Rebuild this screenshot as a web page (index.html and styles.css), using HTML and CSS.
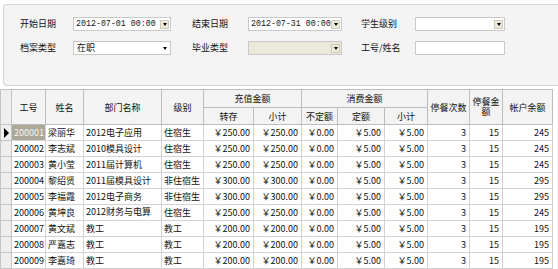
FILE: index.html
```html
<!DOCTYPE html>
<html lang="zh">
<head>
<meta charset="utf-8">
<link rel="stylesheet" href="styles.css">
</head>
<body>
<div class="panel">
  <div class="filters">
    <span class="lbl">开始日期</span>
    <div class="box date"><span class="val">2012-07-01 00:00</span><span class="btn"><i class="arrow"></i></span></div>
    <span class="lbl l2">结束日期</span>
    <div class="box date"><span class="val">2012-07-31 00:00</span><span class="btn"><i class="arrow"></i></span></div>
    <span class="lbl l3">学生级别</span>
    <div class="box"><span class="val"></span><span class="btn"><i class="arrow"></i></span></div>

    <span class="lbl">档案类型</span>
    <div class="box"><span class="val cn">在职</span><span class="plain"><i class="arrow"></i></span></div>
    <span class="lbl l2">毕业类型</span>
    <div class="box disabled"><span class="val"></span><span class="btn"><i class="arrow"></i></span></div>
    <span class="lbl l3">工号/姓名</span>
    <div class="box"><span class="val"></span></div>
  </div>
</div>

<table class="grid">
  <colgroup>
    <col class="c-rh"><col class="c-id"><col class="c-name"><col class="c-dept"><col class="c-lv">
    <col class="c-m1"><col class="c-m2"><col class="c-m3"><col class="c-m4"><col class="c-m5">
    <col class="c-n1"><col class="c-n2"><col class="c-n3">
  </colgroup>
  <thead>
    <tr class="h1">
      <th rowspan="2" class="rh"></th>
      <th rowspan="2">工号</th>
      <th rowspan="2">姓名</th>
      <th rowspan="2">部门名称</th>
      <th rowspan="2">级别</th>
      <th colspan="2">充值金额</th>
      <th colspan="3">消费金额</th>
      <th rowspan="2">停餐次数</th>
      <th rowspan="2" class="wrap">停餐金<br>额</th>
      <th rowspan="2">帐户余额</th>
    </tr>
    <tr class="h2">
      <th>转存</th>
      <th>小计</th>
      <th>不定额</th>
      <th>定额</th>
      <th>小计</th>
    </tr>
  </thead>
  <tbody>
    <tr>
      <td class="rh"><svg class="ptr" width="7" height="10" viewBox="0 0 7 10"><polygon points="1,0 6,5 1,10" fill="#000"/></svg></td>
      <td class="sel">200001</td><td>梁丽华</td><td>2012电子应用</td><td>住宿生</td>
      <td class="r">￥250.00</td><td class="r">￥250.00</td><td class="r">￥0.00</td><td class="r">￥5.00</td><td class="r">￥5.00</td>
      <td class="r">3</td><td class="r">15</td><td class="r">245</td>
    </tr>
    <tr>
      <td class="rh"></td>
      <td>200002</td><td>李志斌</td><td>2010模具设计</td><td>住宿生</td>
      <td class="r">￥250.00</td><td class="r">￥250.00</td><td class="r">￥0.00</td><td class="r">￥5.00</td><td class="r">￥5.00</td>
      <td class="r">3</td><td class="r">15</td><td class="r">245</td>
    </tr>
    <tr>
      <td class="rh"></td>
      <td>200003</td><td>黄小莹</td><td>2011届计算机</td><td>住宿生</td>
      <td class="r">￥250.00</td><td class="r">￥250.00</td><td class="r">￥0.00</td><td class="r">￥5.00</td><td class="r">￥5.00</td>
      <td class="r">3</td><td class="r">15</td><td class="r">245</td>
    </tr>
    <tr>
      <td class="rh"></td>
      <td>200004</td><td>黎绍贤</td><td>2011届模具设计</td><td>非住宿生</td>
      <td class="r">￥300.00</td><td class="r">￥300.00</td><td class="r">￥0.00</td><td class="r">￥5.00</td><td class="r">￥5.00</td>
      <td class="r">3</td><td class="r">15</td><td class="r">295</td>
    </tr>
    <tr>
      <td class="rh"></td>
      <td>200005</td><td>李福霞</td><td>2012电子商务</td><td>非住宿生</td>
      <td class="r">￥300.00</td><td class="r">￥300.00</td><td class="r">￥0.00</td><td class="r">￥5.00</td><td class="r">￥5.00</td>
      <td class="r">3</td><td class="r">15</td><td class="r">295</td>
    </tr>
    <tr>
      <td class="rh"></td>
      <td>200006</td><td>黄坤良</td><td><div class="clip">2012财务与电算<br>化</div></td><td>住宿生</td>
      <td class="r">￥250.00</td><td class="r">￥250.00</td><td class="r">￥0.00</td><td class="r">￥5.00</td><td class="r">￥5.00</td>
      <td class="r">3</td><td class="r">15</td><td class="r">245</td>
    </tr>
    <tr>
      <td class="rh"></td>
      <td>200007</td><td>黄文斌</td><td>教工</td><td>教工</td>
      <td class="r">￥200.00</td><td class="r">￥200.00</td><td class="r">￥0.00</td><td class="r">￥5.00</td><td class="r">￥5.00</td>
      <td class="r">3</td><td class="r">15</td><td class="r">195</td>
    </tr>
    <tr>
      <td class="rh"></td>
      <td>200008</td><td>严嘉志</td><td>教工</td><td>教工</td>
      <td class="r">￥200.00</td><td class="r">￥200.00</td><td class="r">￥0.00</td><td class="r">￥5.00</td><td class="r">￥5.00</td>
      <td class="r">3</td><td class="r">15</td><td class="r">195</td>
    </tr>
    <tr>
      <td class="rh"></td>
      <td>200009</td><td>李嘉琦</td><td>教工</td><td>教工</td>
      <td class="r">￥200.00</td><td class="r">￥200.00</td><td class="r">￥0.00</td><td class="r">￥5.00</td><td class="r">￥5.00</td>
      <td class="r">3</td><td class="r">15</td><td class="r">195</td>
    </tr>
  </tbody>
</table>
</body>
</html>
```
FILE: styles.css
```css
html, body {
  margin: 0;
  padding: 0;
  background: #ffffff;
}
body {
  font-family: "Noto Sans CJK SC", "Liberation Sans", sans-serif;
  font-size: 9px;
  color: #111;
  overflow: hidden;
  width: 558px;
  height: 269px;
}

.panel {
  margin: 4px -4px 0 3px;
  height: 80px;
  border: 1px solid #d4d4d4;
  border-right: none;
  border-radius: 4px 0 0 4px;
  background: #f4f4f4;
  box-sizing: content-box;
}
.filters {
  display: grid;
  grid-template-columns: 53px 98px 77px 94px 73px 90px;
  grid-template-rows: 14px 14px;
  row-gap: 10px;
  padding: 12px 0 0 16px;
  align-items: center;
}
.lbl {
  line-height: 14px;
  white-space: nowrap;
}
.l2 { padding-left: 21px; }
.l3 { padding-left: 19px; }

.box {
  height: 14px;
  box-sizing: border-box;
  border: 1px solid #c9c9c9;
  background: #fff;
  display: flex;
  align-items: center;
  justify-content: space-between;
  padding: 0 1px 0 2px;
}
.box.disabled {
  background: #ebe8da;
}
.val {
  font-family: "Liberation Mono", monospace;
  font-size: 8.3px;
  line-height: 12px;
  white-space: nowrap;
}
.val.cn {
  font-family: "Noto Sans CJK SC", sans-serif;
  font-size: 9px;
  padding-left: 1px;
}
.btn {
  width: 9px;
  height: 9px;
  box-sizing: border-box;
  background: #ece9d8;
  border: 1px solid #d0ccbc;
  display: flex;
  align-items: center;
  justify-content: center;
}
.plain {
  width: 9px;
  height: 9px;
  display: flex;
  align-items: center;
  justify-content: center;
}
.arrow {
  width: 0;
  height: 0;
  border-left: 2.5px solid transparent;
  border-right: 2.5px solid transparent;
  border-top: 3px solid #000;
}

.grid {
  margin-top: 3px;
  border-collapse: collapse;
  table-layout: fixed;
  width: 552px;
}
.c-rh { width: 11px; }
.c-id { width: 34px; }
.c-name { width: 38px; }
.c-dept { width: 78px; }
.c-lv { width: 42px; }
.c-m1 { width: 50px; }
.c-m2 { width: 48px; }
.c-m3 { width: 36px; }
.c-m4 { width: 47px; }
.c-m5 { width: 43px; }
.c-n1 { width: 42px; }
.c-n2 { width: 33px; }
.c-n3 { width: 50px; }

.grid th {
  background: #f3f3f3;
  border: 1px solid #bdbdbd;
  font-weight: normal;
  text-align: center;
  padding: 0;
  line-height: 11px;
  white-space: nowrap;
  overflow: hidden;
}
.grid .h1 th { height: 17px; }
.grid .h2 th { height: 16px; }
.grid th.wrap { line-height: 10px; }

.grid td {
  border: 1px solid #d2d2d2;
  height: 15px;
  padding: 0 2px;
  line-height: 15px;
  white-space: nowrap;
  overflow: hidden;
  background: #fff;
}
.grid td.r {
  text-align: right;
  padding-right: 3px;
}
.grid .rh {
  background: #efefef;
  border-color: #c4c4c4;
  padding: 0;
}
.ptr {
  display: block;
  margin: 0 0 0 2px;
}
.grid td.sel {
  background: #aca899;
  color: #f6f6f0;
}
.clip {
  height: 15px;
  line-height: 13px;
  overflow: hidden;
  white-space: nowrap;
}
```
